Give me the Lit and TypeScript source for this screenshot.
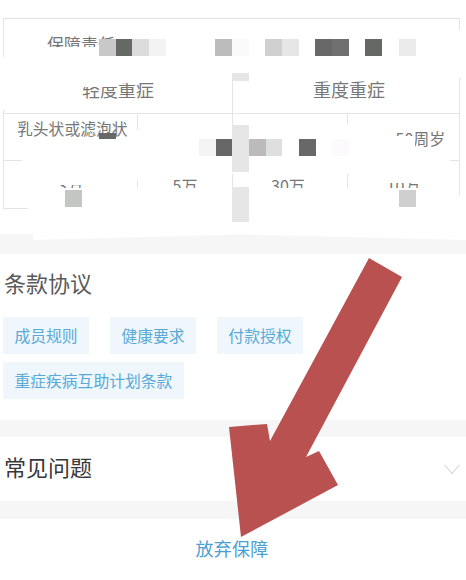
import { LitElement, html, css, svg } from "lit";
import { customElement } from "lit/decorators.js";

type Box = [number, number, number, number, string?];

const PATCHES: Box[] = [
  [5, 47, 453, 26],
  [5, 73, 225, 9],
  [234, 73, 224, 8],
  [80, 73, 38, 14],
  [118, 73, 38, 10],
  [0, 57, 6, 53],
  [457, 30, 9, 48],
  [22, 139, 358, 35],
  [380, 148, 70, 26],
  [132, 130, 10, 10],
  [132, 174, 10, 6],
  [340, 125, 14, 14],
  [393, 136, 22, 14],
  [50, 174, 40, 11],
  [380, 174, 40, 9],
  [28, 188, 430, 24],
  [455, 195, 11, 20],
  [22, 209, 10, 4],
];

const G = 16.67;
const MOSAIC: Box[] = [
  [99, 39, G, G, "#c8c8c8"],
  [115.7, 39, G, G, "#666866"],
  [132.3, 39, G, G, "#dcdcdc"],
  [149, 39, G, G, "#f3f3f3"],
  [215, 39, G, G, "#bcbcbc"],
  [232, 39, G, G, "#fbfafa"],
  [265, 39, G, G, "#d0d0d0"],
  [282, 39, G, G, "#e6e6e6"],
  [315, 39, G, G, "#686868"],
  [332, 39, G, G, "#707070"],
  [365, 39, G, G, "#666866"],
  [399, 39, G, G, "#ebebeb"],
  [232, 73, G, 8, "#e6e6e6"],
  [99, 133, G, 6, "#686868"],
  [199, 139, G, G, "#f3f4f3"],
  [215.5, 139, G, G, "#666866"],
  [232, 125, G, 47, "#e6e6e6"],
  [249, 139, G, G, "#bcbaba"],
  [265.5, 139, G, G, "#dde0dd"],
  [299, 139, G, G, "#686868"],
  [332, 139, G, G, "#fcfafc"],
  [65, 190, G, G, "#c4c6c4"],
  [399, 190, G, G, "#cfcfcf"],
  [232, 187, G, 35, "#e6e6e6"],
];

@customElement("app-root")
export class AppRoot extends LitElement {
  static styles = css`
    :host {
      display: block;
      position: relative;
      width: 466px;
      height: 580px;
      overflow: hidden;
      background: #f6f6f6;
      font-family: "Noto Sans CJK SC", "Noto Sans", sans-serif;
    }
    .section { background: #fff; }
    .coverage { height: 234px; padding: 18px 6px 0 3px; box-sizing: border-box; margin-bottom: 20px; }
    .table {
      height: 191px;
      border: 1px solid #e4e4e4;
      box-sizing: border-box;
      display: grid;
      grid-template-columns: 134px 95px 115px 1fr;
      grid-template-rows: 48px 47px 47px 1fr;
      color: #777;
      font-size: 16px;
      line-height: 18px;
    }
    .cell {
      display: flex;
      align-items: center;
      justify-content: center;
      border-right: 1px solid #e4e4e4;
      border-bottom: 1px solid #e4e4e4;
    }
    .cell:last-child, .end { border-right: 0; }
    .last { border-bottom: 0; }
    .title { grid-column: 1 / 5; justify-content: flex-start; align-items: flex-start; padding: 16px 0 0 43px; font-size: 17px; }
    .half { grid-column: span 2; }
    .half span { position: relative; top: -1px; font-size: 18px; }
    .right-half { padding-left: 6px; }
    .shift { padding-right: 4px; }
    .tall { align-items: flex-start; justify-content: flex-start; padding: 6px 0 0 13px; white-space: nowrap; font-size: 15.8px; }
    .age { align-items: flex-start; padding: 15px 0 0 34px; white-space: nowrap; }
    .terms { padding: 17px 0 21px 3px; margin-bottom: 17px; }
    h2 { margin: 0; font-weight: 400; font-size: 22px; line-height: 22px; color: #5a5a5a; }
    .terms h2 { padding-left: 1px; }
    .tags { display: flex; flex-wrap: wrap; gap: 8px 21px; margin-top: 24px; width: 330px; }
    .tag {
      height: 37px;
      padding: 0 11.4px;
      display: flex;
      align-items: center;
      background: #eff7fc;
      color: #5aa9d6;
      font-size: 15.8px;
      white-space: nowrap;
    }
    .faq {
      height: 64px;
      display: flex;
      align-items: center;
      justify-content: space-between;
      padding: 0 6px 0 4px;
      margin-bottom: 18px;
      box-sizing: border-box;
    }
    .faq h2 { color: #383838; margin-top: -7px; }
    .footer { height: 61px; display: flex; justify-content: center; padding: 19px 2px 0 0; box-sizing: border-box; color: #4c9fd1; font-size: 18px; line-height: 20px; }
    .footer span { letter-spacing: 0.2px; }
    .box { position: absolute; }
    .white { background: #fff; }
    .overlay { position: absolute; inset: 0; width: 466px; height: 580px; }
    .chev { display: block; }
  `;

  private place(b: Box) {
    return `left:${b[0]}px;top:${b[1]}px;width:${b[2]}px;height:${b[3]}px;${b[4] ? `background:${b[4]};` : ""}`;
  }

  render() {
    return html`
      <div class="section coverage">
        <div class="table">
          <div class="cell title end">保障责任</div>
          <div class="cell half"><span>轻度重症</span></div>
          <div class="cell half end right-half"><span>重度重症</span></div>
          <div class="cell tall">乳头状或滤泡状</div>
          <div class="cell"></div>
          <div class="cell"></div>
          <div class="cell end age">50周岁</div>
          <div class="cell last">3万</div>
          <div class="cell last">5万</div>
          <div class="cell last shift">30万</div>
          <div class="cell last end">10万</div>
        </div>
      </div>
      <div class="section terms">
        <h2>条款协议</h2>
        <div class="tags">
          <div class="tag">成员规则</div>
          <div class="tag">健康要求</div>
          <div class="tag">付款授权</div>
          <div class="tag">重症疾病互助计划条款</div>
        </div>
      </div>
      <div class="section faq">
        <h2>常见问题</h2>
        <svg class="chev" width="16" height="11" viewBox="0 0 16 11" fill="none">
          <path d="M0.5 0.8 L8 9.5 L15.5 0.8" stroke="#dcdcdc" stroke-width="1.2" />
        </svg>
      </div>
      <div class="section footer"><span>放弃保障</span></div>

      ${PATCHES.map((p) => html`<div class="box white" style=${this.place(p)}></div>`)}
      ${MOSAIC.map((m) => html`<div class="box" style=${this.place(m)}></div>`)}

      <svg class="overlay" viewBox="0 0 466 580">
        ${svg`<polygon points="33,234 33,240 240,234.5 466,240 466,234" fill="#fff" />`}
        ${svg`<polygon points="241,537 229,427 267,424 270,441 369,258 402,277 306,457 319,451 338,485" fill="#b95151" />`}
      </svg>
    `;
  }
}
